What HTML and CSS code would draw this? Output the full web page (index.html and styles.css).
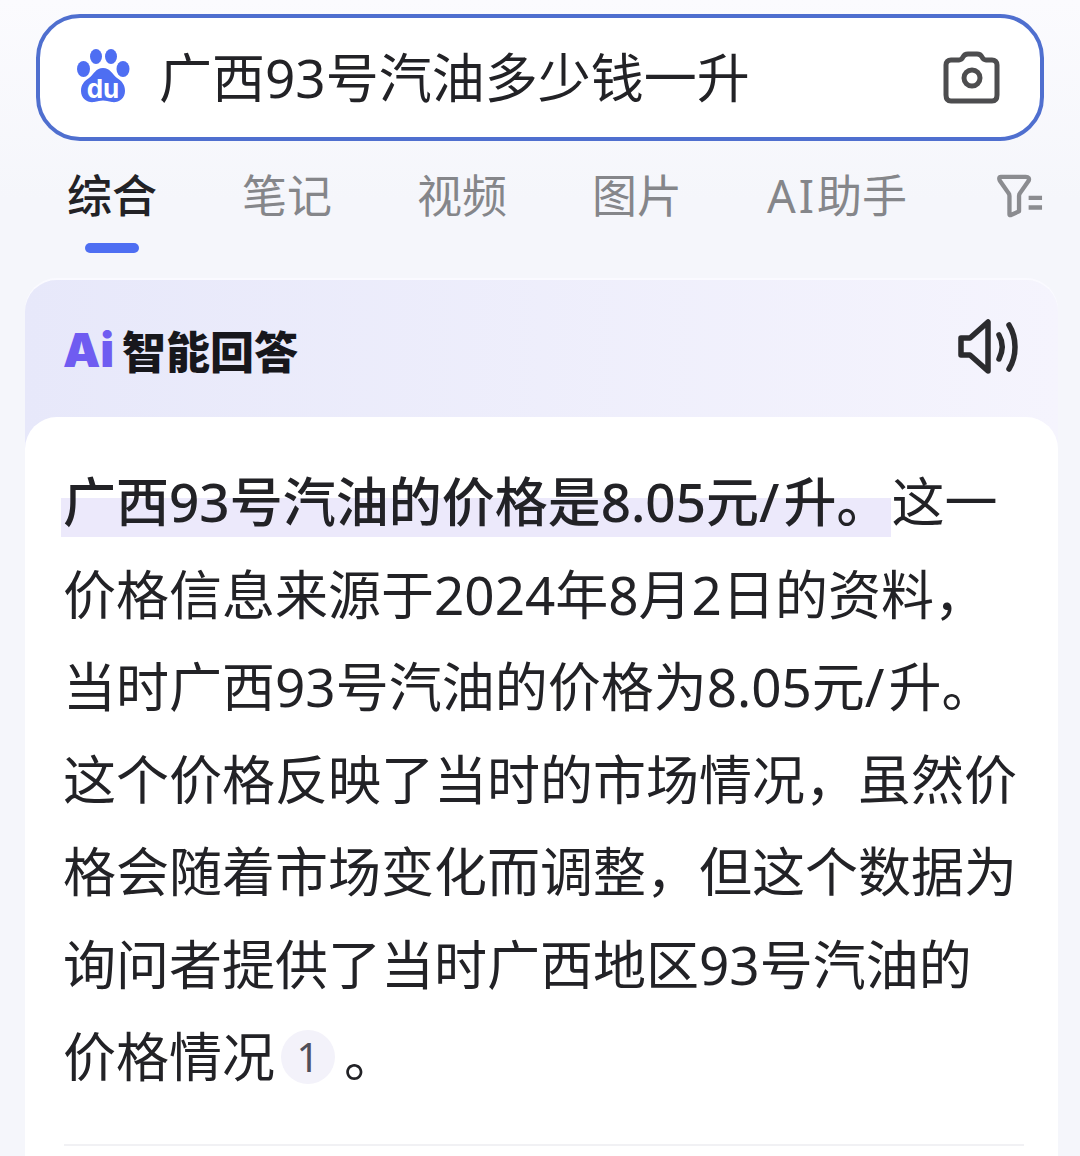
FILE: index.html
```html
<!DOCTYPE html>
<html lang="zh-CN">
<head>
    <meta charset="UTF-8">
    <meta name="viewport" content="width=device-width, initial-scale=1.0">
    <title>广西93号汽油多少钱一升</title>
    <link rel="stylesheet" href="styles.css">
</head>
<body>
    <div class="search-box">
        <svg class="paw" viewBox="0 0 54 56">
            <ellipse cx="7.5" cy="21" rx="6.5" ry="8" fill="#4e6ef2"/>
            <ellipse cx="20" cy="8.5" rx="6" ry="7.5" fill="#4e6ef2"/>
            <ellipse cx="35" cy="8.5" rx="6" ry="7.5" fill="#4e6ef2"/>
            <ellipse cx="47" cy="21" rx="6.5" ry="8" fill="#4e6ef2"/>
            <path d="M27 20c7 0 9 6 14 10 5 3 8 7 8 13 0 8-7 12-13 11-4-.6-6-1.600-9-1.600s-5 1-9 1.600c-6 1-13-3-13-11 0-6 3-10 8-13 5-4 7-10 14-10z" fill="#4e6ef2"/>
            <text x="27" y="50" text-anchor="middle" class="paw-text">du</text>
        </svg>
        <div class="query">广西93号汽油多少钱一升</div>
        <svg class="camera" viewBox="0 0 58 56" fill="none" stroke="#4d4d4f" stroke-width="5" stroke-linejoin="round">
            <path d="M8 10h8c2 0 3-1 4-3s2-3 5-3h9c3 0 4 1 5 3s2 3 4 3h6c3 0 5 2 5 5v30c0 4-2 6-5 6H8c-3 0-5-2-5-6V15c0-3 2-5 5-5z"/>
            <circle cx="29" cy="28" r="8"/>
        </svg>
    </div>

    <div class="tabs">
        <div class="tab active">综合</div>
        <div class="tab">笔记</div>
        <div class="tab">视频</div>
        <div class="tab">图片</div>
        <div class="tab"><span class="tab-latin">AI</span>助手</div>
        <svg class="filter" viewBox="0 0 48 44" fill="none" stroke="#8b8c90" stroke-width="4.500" stroke-linejoin="round">
            <path d="M4 2h26c3 0 4 2 3 4l-9 13c-1 1-1 2-1 3v16l-9 4c-1 0-1 0-1-1V22c0-1 0-2-1-3L3 6C2 4 2 2 4 2z"/>
            <path d="M33 24h14M33 34h14"/>
        </svg>
    </div>

    <div class="card">
        <div class="card-head">
            <div class="card-title"><span class="ai-mark">Ai</span>智能回答</div>
            <svg class="speaker" viewBox="0 0 62 56" fill="none" stroke="#2b2b2e" stroke-width="5.500" stroke-linecap="round" stroke-linejoin="round">
                <path d="M3 19h9L30 3v49L12 36H3z"/>
                <path d="M41 16c4 7 4 16 0 24"/>
                <path d="M51 6c8 13 8 31 0 44"/>
            </svg>
        </div>
        <div class="card-body">
            <p class="answer"><span class="mark">广西93号汽油的价格是8.05元<span class="slash">/</span>升。</span>这一<br>价格信息来源于2024年8月2日的资料，<br>当时广西93号汽油的价格为8.05元<span class="slash">/</span>升。<br>这个价格反映了当时的市场情况，虽然价<br>格会随着市场变化而调整，但这个数据为<br>询问者提供了当时广西地区93号汽油的<br>价格情况<span class="cite">1</span>。</p>
            <div class="divider"></div>
        </div>
    </div>
</body>
</html>
```

FILE: styles.css
```css
html, body {
    height: 1156px;
    overflow: hidden;
}

body {
    margin: 0;
    font-family: "Noto Sans", "Noto Sans CJK SC", sans-serif;
    background: linear-gradient(#fbfbfe, #f5f6fb 200px);
    color: #222226;
}

.search-box {
    display: flex;
    align-items: center;
    box-sizing: border-box;
    height: 127px;
    margin: 14px 36px 0;
    padding: 0 39px 4px 36px;
    background: white;
    border: 4px solid #4f6fcf;
    border-radius: 44px;
}

.paw {
    width: 54px;
    height: 56px;
    margin-right: 29px;
}

.paw-text {
    font-family: "Inter", sans-serif;
    font-size: 26px;
    font-weight: 700;
    fill: white;
}

.query {
    flex: 1;
    margin-top: 4px;
    font-size: 53px;
    line-height: 60px;
}

.camera {
    width: 58px;
    height: 56px;
    margin-top: 4px;
}

.tabs {
    display: flex;
    align-items: flex-start;
    gap: 85px;
    height: 139px;
    padding: 25px 37px 0 67px;
    box-sizing: border-box;
}

.tab {
    position: relative;
    flex-shrink: 0;
    font-size: 45px;
    line-height: 60px;
    white-space: nowrap;
    color: #85868a;
}

.tab-latin {
    letter-spacing: 3px;
}

.tab.active {
    color: #222226;
    font-weight: 500;
}

.tab.active::after {
    content: "";
    position: absolute;
    left: 18px;
    top: 77px;
    width: 54px;
    height: 10px;
    border-radius: 5px;
    background: #4e6ef2;
}

.filter {
    width: 46px;
    height: 44px;
    margin: 8px 0 0 auto;
}

.card {
    margin: 0 22px 0 25px;
    border-radius: 32px 32px 0 0;
    background: linear-gradient(90deg, #e7e8fa, #f5f4fd);
    box-shadow: 0 -2px 0 #fafaff;
}

.card-head {
    display: flex;
    justify-content: space-between;
    align-items: flex-start;
    height: 137px;
    box-sizing: border-box;
    padding: 38px 38px 0 38px;
}

.card-title {
    display: flex;
    align-items: center;
    font-family: "Noto Sans CJK SC", sans-serif;
    font-size: 44px;
    font-weight: 900;
    line-height: 64px;
    color: #17171c;
}

.ai-mark {
    width: 59px;
    font-family: "Inter", sans-serif;
    font-size: 47px;
    font-weight: 900;
    color: #6f5cf1;
}

.speaker {
    width: 62px;
    height: 56px;
    margin-top: 1px;
}

.card-body {
    box-sizing: border-box;
    height: 739px;
    padding: 39px 34px 0 39px;
    background: white;
    border-radius: 32px 32px 0 0;
}

.answer {
    margin: 0 0 0 -1px;
    font-size: 53px;
    line-height: 92.5px;
    white-space: nowrap;
}

.mark {
    margin-left: -2px;
    padding-left: 2px;
    padding-right: 2px;
    font-weight: 500;
    background: linear-gradient(transparent 33px, #ece9fb 33px, #ece9fb 72px, transparent 72px);
}

.slash {
    letter-spacing: 4px;
}

.cite {
    display: inline-block;
    width: 54px;
    height: 54px;
    margin: 0 9px 0 6px;
    border-radius: 50%;
    background: #f3f2fa;
    color: #4f4f5a;
    font-size: 40px;
    line-height: 54px;
    text-align: center;
    vertical-align: 5px;
}

.divider {
    height: 2px;
    margin-top: 40px;
    background: #f1f1f4;
}
```
